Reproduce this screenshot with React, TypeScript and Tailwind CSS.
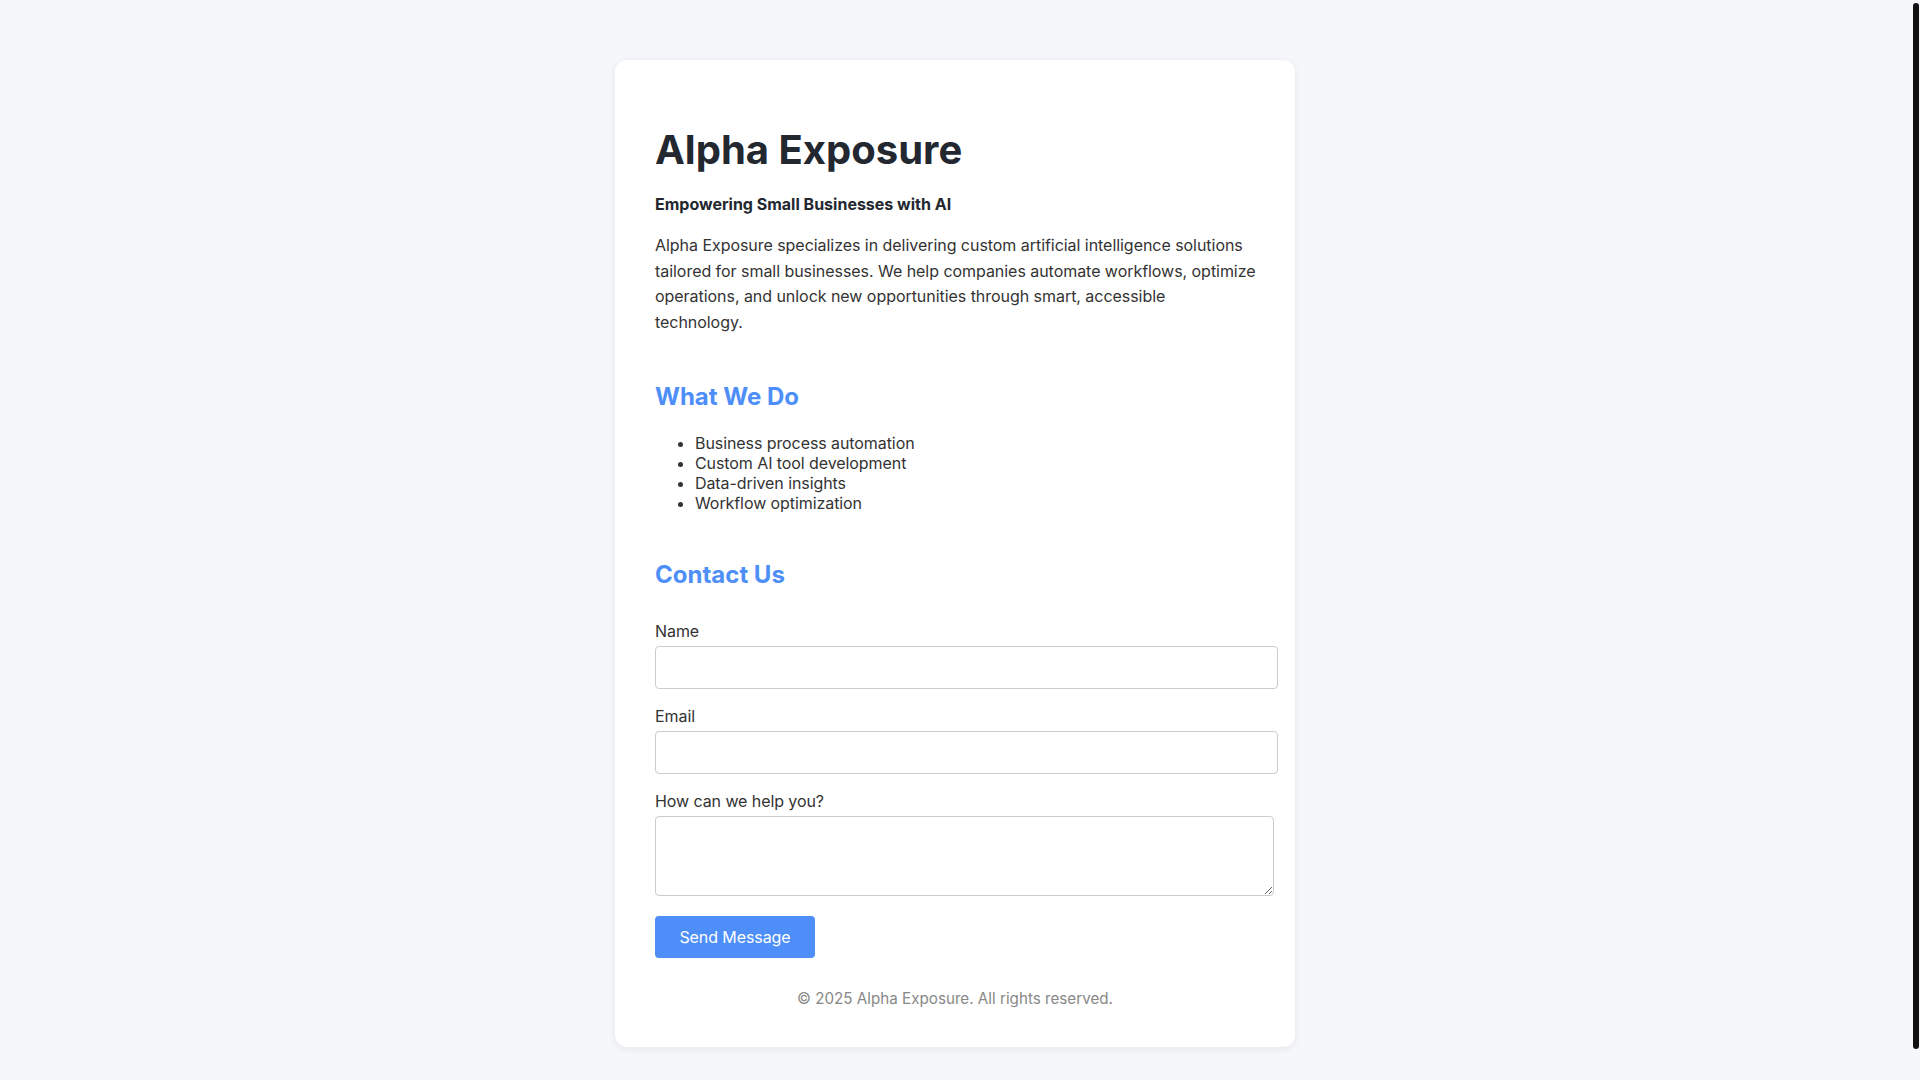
export default function App() {
  return (
    <div className="min-h-screen bg-[#f5f7fa] py-[60px] pr-[10px] font-['Inter',sans-serif] text-[#333333]">
      <main className="mx-auto w-[680px] rounded-[12px] bg-white px-[40px] pt-[40px] pb-[40px] shadow-[0_2px_8px_rgba(0,0,0,0.07)]">
        <h1 className="mt-[26px] text-[40px] font-bold leading-[48px] text-[#23272f]">
          Alpha Exposure
        </h1>
        <p className="mt-[17.5px] text-[16px] font-bold leading-[25.6px] text-[#23272f]">
          Empowering Small Businesses with AI
        </p>
        <p className="mt-[16px] w-[610px] text-[16px] leading-[25.6px] tracking-[-0.045px]">
          Alpha Exposure specializes in delivering custom artificial intelligence solutions
          <br />
          tailored for small businesses. We help companies automate workflows, optimize
          <br />
          operations, and unlock new opportunities through smart, accessible
          <br />
          technology.
        </p>

        <h2 className="mt-[47px] text-[24px] font-bold leading-[29px] text-[#4d8ef8]">
          What We Do
        </h2>
        <ul className="mt-[21.5px] list-disc pl-[40px] text-[16px] leading-[20px] tracking-[-0.08px]">
          <li>Business process automation</li>
          <li>Custom AI tool development</li>
          <li>Data-driven insights</li>
          <li>Workflow optimization</li>
        </ul>

        <h2 className="mt-[47px] text-[24px] font-bold leading-[29px] text-[#4d8ef8]">
          Contact Us
        </h2>
        <form className="mt-[33px] tracking-[-0.08px]" onSubmit={(e) => e.preventDefault()}>
          <label htmlFor="name" className="block text-[16px] leading-[19.4px]">
            Name
          </label>
          <input
            id="name"
            type="text"
            className="mt-[5px] block h-[43px] w-[623px] rounded-[4px] border border-[#cccccc] px-[10px] text-[16px]"
          />
          <label htmlFor="email" className="mt-[17.5px] block text-[16px] leading-[19.4px]">
            Email
          </label>
          <input
            id="email"
            type="email"
            className="mt-[5px] block h-[43px] w-[623px] rounded-[4px] border border-[#cccccc] px-[10px] text-[16px]"
          />
          <label htmlFor="message" className="mt-[17.5px] block text-[16px] leading-[19.4px]">
            How can we help you?
          </label>
          <textarea
            id="message"
            className="mt-[5px] block h-[80px] w-[619px] rounded-[4px] border border-[#cccccc] p-[10px] text-[16px]"
          />
          <button
            type="submit"
            className="mt-[19.6px] block h-[42px] w-[160px] rounded-[4px] bg-[#4d8ef8] text-[16px] text-white"
          >
            Send Message
          </button>
        </form>

        <footer className="mt-[32.3px] text-center text-[15.2px] leading-[17px] text-[#888888]">
          © 2025 Alpha Exposure. All rights reserved.
        </footer>
      </main>
      <div aria-hidden="true" className="fixed top-[3px] right-[1px] h-[1046px] w-[6px] rounded-full bg-[#111111]" />
    </div>
  );
}
